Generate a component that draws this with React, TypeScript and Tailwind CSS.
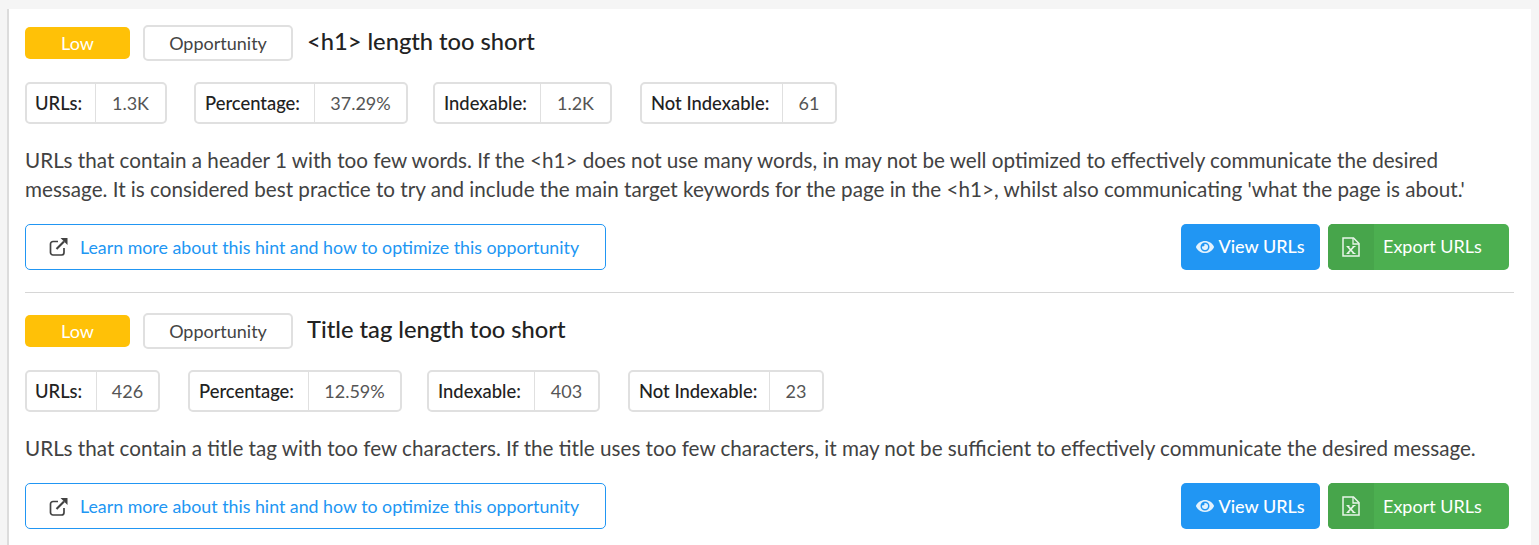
import { FaEye } from "react-icons/fa";

type Stat = { label: string; value: string; labelW: string; valueW: string; mr: string; pl?: string };

function LinkIcon() {
  return (
    <svg viewBox="0 0 19 19" className="w-[19px] h-[19px] mr-[12px] text-[#424242]" fill="none">
      <path d="M15 11v4.5a2.5 2.5 0 0 1-2.500 2.500H4a2.500 2.500 0 0 1-2.500-2.500V7A2.500 2.500 0 0 1 4 4.500h5" stroke="currentColor" strokeWidth="1.7" />
      <path d="M7.500 12L15 4.500" stroke="currentColor" strokeWidth="2.200" />
      <path d="M11.500 1H18.500V8Z" fill="currentColor" />
    </svg>
  );
}

function ExcelIcon() {
  return (
    <svg viewBox="0 0 18 20" className="w-[18px] h-[20px] text-[#e8f5e9]" fill="none" stroke="currentColor">
      <path d="M1 1h10.500L17 6.500V19H1Z" strokeWidth="1.500" />
      <path d="M11 1v6h6" strokeWidth="1.300" />
      <path d="M5.500 9.500l6.500 7M12 9.500l-6.500 7" strokeWidth="1.700" />
      <path d="M4.500 9.500h3M10.500 9.500h3M4.500 16.500h3M10.500 16.500h3" strokeWidth="1" />
    </svg>
  );
}

function Hint({ title, stats, text }: { title: string; stats: Stat[]; text: React.ReactNode }) {
  return (
    <div>
      <div className="flex items-center h-9">
        <span className="w-[105px] h-8 rounded-[5px] bg-[#ffc107] text-white text-[18px] flex items-center justify-center">Low</span>
        <span className="ml-[13px] w-[150px] h-9 rounded-[5px] border-2 border-[#e0e0e0] text-[#444] text-[18px] flex items-center justify-center">Opportunity</span>
        <h3 className="ml-[14px] text-[23.7px] font-medium text-[#222] leading-none -mt-[3px]">{title}</h3>
      </div>
      <div className="flex mt-[21px]">
        {stats.map((s) => (
          <div key={s.label} className={`flex h-[42px] rounded-[5px] border-2 border-[#e0e0e0] text-[18px] ${s.mr}`}>
            <span className={`${s.labelW} ${s.pl ?? "pl-[9px]"} pt-px flex items-center font-medium text-[18.4px] text-[#222]`}>{s.label}</span>
            <span className={`${s.valueW} flex items-center justify-center border-l border-[#e0e0e0] text-[#555]`}>{s.value}</span>
          </div>
        ))}
      </div>
      <p className="mt-[22px] text-[20.66px] leading-[28.5px] text-[#424242]">{text}</p>
      <div className="flex justify-between items-center mt-[20.9px] pr-[5px]">
        <a className="w-[581px] h-[46px] rounded-[5px] border border-[#2196f3] flex items-center pl-[23px] text-[#2196f3] text-[17.8px]">
          <LinkIcon />
          Learn more about this hint and how to optimize this opportunity
        </a>
        <div className="flex gap-2">
          <button className="w-[139px] h-[46px] rounded-[5px] bg-[#2196f3] text-white text-[18px] font-medium flex items-center justify-center gap-[4px]">
            <FaEye className="w-[18px] h-[18px] text-[#e3f2fd]" />
            View URLs
          </button>
          <button className="w-[181px] h-[46px] rounded-[5px] bg-[#4caf50] text-white text-[18px] flex items-stretch overflow-hidden">
            <span className="w-[46px] bg-[#47a54b] flex items-center justify-center">
              <ExcelIcon />
            </span>
            <span className="pl-[9px] flex items-center">Export URLs</span>
          </button>
        </div>
      </div>
    </div>
  );
}

export default function App() {
  return (
    <div className="h-[545px] overflow-hidden bg-[#f5f5f5] pt-[9px] pl-[7px] pr-[8px] font-['Lato','Liberation_Sans',sans-serif]">
      <div className="h-full bg-white border-l-2 border-[#dcdcdc] pl-[16px] pr-[17px] pt-[16px]">
        <Hint
          title="<h1> length too short"
          stats={[
            { label: "URLs:", value: "1.3K", labelW: "w-[68px]", valueW: "w-[70px]", mr: "mr-[27px]", pl: "pl-[8px]" },
            { label: "Percentage:", value: "37.29%", labelW: "w-[118px]", valueW: "w-[92px]", mr: "mr-[25px]" },
            { label: "Indexable:", value: "1.2K", labelW: "w-[105px]", valueW: "w-[70px]", mr: "mr-[28px]" },
            { label: "Not Indexable:", value: "61", labelW: "w-[140px]", valueW: "w-[53px]", mr: "" },
          ]}
          text={
            <>
              URLs that contain a header 1 with too few words. If the &lt;h1&gt; does not use many words, in may not be well optimized to effectively communicate the desired
              <br />
              message. It is considered best practice to try and include the main target keywords for the page in the &lt;h1&gt;, whilst also communicating 'what the page is about.'
            </>
          }
        />
        <div className="h-px bg-[#d6d6d6] mt-[22px] mb-[20.2px]" />
        <Hint
          title="Title tag length too short"
          stats={[
            { label: "URLs:", value: "426", labelW: "w-[69px]", valueW: "w-[62px]", mr: "mr-[28px]", pl: "pl-[8px]" },
            { label: "Percentage:", value: "12.59%", labelW: "w-[118px]", valueW: "w-[92px]", mr: "mr-[25px]" },
            { label: "Indexable:", value: "403", labelW: "w-[105px]", valueW: "w-[64px]", mr: "mr-[28px]" },
            { label: "Not Indexable:", value: "23", labelW: "w-[139px]", valueW: "w-[53px]", mr: "" },
          ]}
          text="URLs that contain a title tag with too few characters. If the title uses too few characters, it may not be sufficient to effectively communicate the desired message."
        />
      </div>
    </div>
  );
}
